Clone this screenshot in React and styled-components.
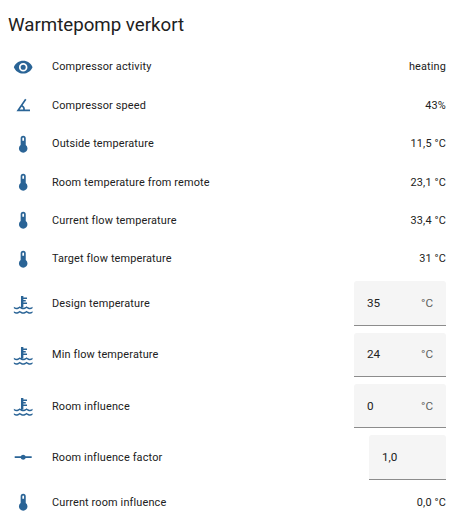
import React from 'react';
import styled, { createGlobalStyle } from 'styled-components';

const Global = createGlobalStyle`
    html, body {
        margin: 0;
        padding: 0;
        background: #fff;
    }
    body {
        font-family: Roboto, "Liberation Sans", sans-serif;
        color: #212121;
    }
`;

const Card = styled.div`
    width: 455px;
    height: 520px;
    overflow: hidden;
    background: #fff;
`;
const Title = styled.h1`
    margin: 0;
    height: 47.8px;
    padding: 13px 0 0 8px;
    box-sizing: border-box;
    font-size: 18.7px;
    line-height: 24px;
    font-weight: 400;
    color: #212121;
`;
const List = styled.div`
    display: flex;
    flex-direction: column;
    padding: 0 9px 0 12.8px;
`;
const Row = styled.div`
    display: flex;
    align-items: center;
    height: ${props => props.$tall ? '51.2px' : '38.4px'};
`;
const IconSlot = styled.div`
    display: flex;
    flex: 0 0 39.2px;
    color: #2a6496;
`;
const Label = styled.div`
    flex: 1;
    font-size: 10.9px;
    letter-spacing: 0.15px;
`;
const Value = styled.div`
    font-size: 10.9px;
    letter-spacing: 0.15px;
`;
const Field = styled.div`
    display: flex;
    align-items: center;
    justify-content: space-between;
    box-sizing: border-box;
    width: ${props => props.$narrow ? '77px' : '92px'};
    height: 44.7px;
    padding: 0 13px;
    background: #f5f5f5;
    border-bottom: 1px solid #8c8c8c;
    border-radius: 3px 3px 0 0;
    font-size: 11.7px;
`;
const Unit = styled.span`
    color: #5f5f5f;
`;

const paths = {
    eye: 'M12,9A3,3 0 0,0 9,12A3,3 0 0,0 12,15A3,3 0 0,0 15,12A3,3 0 0,0 12,9M12,17A5,5 0 0,1 7,12A5,5 0 0,1 12,7A5,5 0 0,1 17,12A5,5 0 0,1 12,17M12,4.5C7,4.5 2.73,7.61 1,12C2.73,16.39 7,19.5 12,19.5C17,19.5 21.27,16.39 23,12C21.27,7.61 17,4.5 12,4.5Z',
    angle: 'M20,19H4.09L14.18,4.43L15.82,5.57L11.28,12.13C12.89,12.96 14,14.62 14,16.54C14,16.7 14,16.85 13.97,17H20V19M7.91,17H11.96C12,16.85 12,16.7 12,16.54C12,15.28 11.24,14.22 10.14,13.78L7.91,17Z',
    thermometer: 'M15 13V5A3 3 0 0 0 9 5V13A5 5 0 1 0 15 13M12 4A1 1 0 0 1 13 5V8H11V5A1 1 0 0 1 12 4Z',
    coolant: 'M9.4 2.5H12.2V4H16.5V5.8H12.2V7H15V8.8H12.2V10H16.5V11.8H12.2V16H9.4V2.5ZM1,15C2,15.8 3,16.2 4,16.2C5.2,16.2 6.6,15.5 8,14.4C9.4,15.5 10.7,16.2 12,16.2C13.3,16.2 14.6,15.5 16,14.4C17.4,15.5 18.8,16.2 20,16.2C21,16.2 22,15.8 23,15V16.9C22,17.6 21,18 20,18C18.6,18 17.2,17.4 16,16.5C14.8,17.4 13.4,18 12,18C10.6,18 9.2,17.4 8,16.5C6.8,17.4 5.4,18 4,18C3,18 2,17.6 1,16.9V15ZM1,20.2C2,21 3,21.4 4,21.4C5.2,21.4 6.6,20.7 8,19.6C9.4,20.7 10.7,21.4 12,21.4C13.3,21.4 14.6,20.7 16,19.6C17.4,20.7 18.8,21.4 20,21.4C21,21.4 22,21 23,20.2V22.1C22,22.8 21,23.2 20,23.2C18.6,23.2 17.2,22.6 16,21.7C14.8,22.6 13.4,23.2 12,23.2C10.6,23.2 9.2,22.6 8,21.7C6.8,22.6 5.4,23.2 4,23.2C3,23.2 2,22.8 1,22.1V20.2Z',
    vertex: 'M2,11H9.17C9.58,9.83 10.69,9 12,9C13.31,9 14.42,9.83 14.83,11H22V13H14.83C14.42,14.17 13.31,15 12,15C10.69,15 9.58,14.17 9.17,13H2V11Z',
};

const Icon = ({name}) => (
    <svg width="20.4" height="20.4" viewBox="0 0 24 24" fill="currentColor">
        <path d={paths[name]} />
    </svg>
);

const rows = [
    {icon: 'eye', label: 'Compressor activity', value: 'heating'},
    {icon: 'angle', label: 'Compressor speed', value: '43%'},
    {icon: 'thermometer', label: 'Outside temperature', value: '11,5 °C'},
    {icon: 'thermometer', label: 'Room temperature from remote', value: '23,1 °C'},
    {icon: 'thermometer', label: 'Current flow temperature', value: '33,4 °C'},
    {icon: 'thermometer', label: 'Target flow temperature', value: '31 °C'},
    {icon: 'coolant', label: 'Design temperature', field: '35', unit: '°C'},
    {icon: 'coolant', label: 'Min flow temperature', field: '24', unit: '°C'},
    {icon: 'coolant', label: 'Room influence', field: '0', unit: '°C'},
    {icon: 'vertex', label: 'Room influence factor', field: '1,0'},
    {icon: 'thermometer', label: 'Current room influence', value: '0,0 °C'},
];

const App = () => {
    return (
        <Card>
            <Global />
            <Title>Warmtepomp verkort</Title>
            <List>
                {rows.map(row => (
                    <Row key={row.label} $tall={!!row.field}>
                        <IconSlot><Icon name={row.icon} /></IconSlot>
                        <Label>{row.label}</Label>
                        {row.field
                            ? <Field $narrow={!row.unit}><span>{row.field}</span><Unit>{row.unit}</Unit></Field>
                            : <Value>{row.value}</Value>}
                    </Row>
                ))}
            </List>
        </Card>
    );
};
export default App;
